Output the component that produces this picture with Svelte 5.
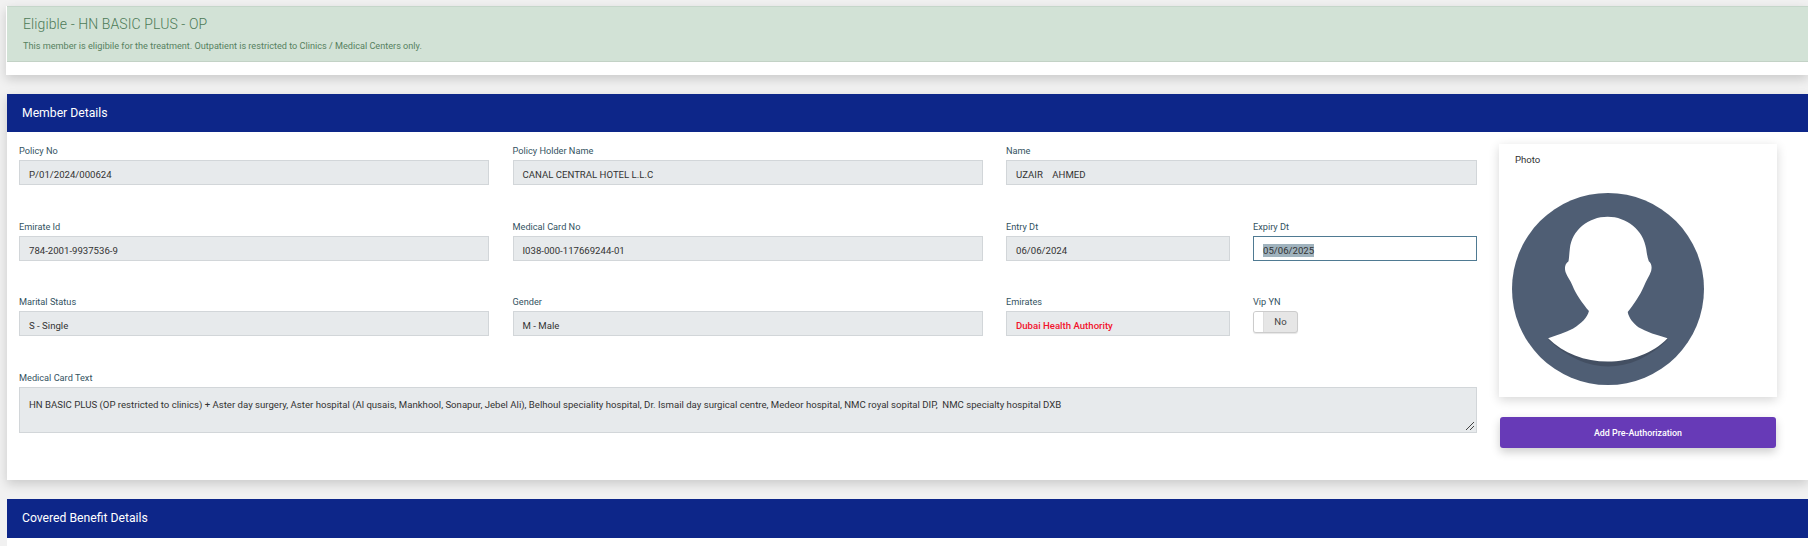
<script>
  const rows = [
    [{ l: 'Policy No', v: 'P/01/2024/000624' }, { l: 'Policy Holder Name', v: 'CANAL CENTRAL HOTEL L.L.C' }, { l: 'Name', v: 'UZAIR    AHMED' }],
    [{ l: 'Emirate Id', v: '784-2001-9937536-9' }, { l: 'Medical Card No', v: 'I038-000-117669244-01' }],
    [{ l: 'Marital Status', v: 'S - Single' }, { l: 'Gender', v: 'M - Male' }]
  ];
  const cardText = 'HN BASIC PLUS (OP restricted to clinics) + Aster day surgery, Aster hospital (Al qusais, Mankhool, Sonapur, Jebel Ali), Belhoul speciality hospital, Dr. Ismail day surgical centre, Medeor hospital, NMC royal sopital DIP,  NMC specialty hospital DXB';
</script>

<div class="page">
  <section class="status-card">
    <div class="alert">
      <h4>Eligible - HN BASIC PLUS - OP</h4>
      <p>This member is eligibile for the treatment. Outpatient is restricted to Clinics / Medical Centers only.</p>
    </div>
  </section>

  <section class="card">
    <header class="bar">Member Details</header>
    <div class="body">
      <div class="form">
        {#each rows[0] as f}
          <div class="field"><span class="label">{f.l}</span><div class="input">{f.v}</div></div>
        {/each}
        {#each rows[1] as f}
          <div class="field"><span class="label">{f.l}</span><div class="input">{f.v}</div></div>
        {/each}
        <div class="split">
          <div class="field"><span class="label">Entry Dt</span><div class="input">06/06/2024</div></div>
          <div class="field"><span class="label">Expiry Dt</span><div class="input focus"><span class="sel">05/06/2025</span></div></div>
        </div>
        {#each rows[2] as f}
          <div class="field"><span class="label">{f.l}</span><div class="input">{f.v}</div></div>
        {/each}
        <div class="split">
          <div class="field"><span class="label">Emirates</span><div class="input red">Dubai Health Authority</div></div>
          <div class="field">
            <span class="label">Vip YN</span>
            <div class="toggle"><span class="knob"></span><span class="off">No</span></div>
          </div>
        </div>
        <div class="field wide">
          <span class="label">Medical Card Text</span>
          <div class="input area">{cardText}
            <svg class="grip" width="10" height="10" viewBox="0 0 10 10"><path d="M1 9 9 1M5 9 9 5" stroke="#444" stroke-width="1" fill="none"/></svg>
          </div>
        </div>
      </div>
      <aside class="side">
        <div class="photo">
          <span class="photo-label">Photo</span>
          <svg class="avatar" viewBox="157 39 574 574" width="192" height="192">
            <circle cx="444" cy="326" r="287" fill="#4f5e74"/>
            <path d="M266 478C320 530 385 558 444 558C505 558 570 530 622 478L622 473L266 473Z" fill="#434f62"/>
            <path fill="#fff" d="M443 110C385 110 336 150 330 205C328 220 328 232 326 243C316 250 313 262 317 275C322 290 332 300 338 316C348 342 368 368 387 392C382 412 366 428 340 444C318 456 290 464 265 473C310 518 375 543 443 543C510 543 580 518 622 473C590 463 560 455 535 440C520 430 506 412 503 395C520 372 540 345 552 316C558 300 568 288 573 272C576 260 574 250 566 243C562 232 560 220 558 205C550 150 500 110 443 110Z"/>
          </svg>
        </div>
        <button class="primary">Add Pre-Authorization</button>
      </aside>
    </div>
  </section>

  <section class="card last">
    <header class="bar tall">Covered Benefit Details</header>
  </section>
</div>

<style>
  :global(body) { margin: 0; background: #f1f1f1; overflow: hidden; }
  .page { width: 1808px; height: 546px; overflow: hidden; padding: 6px 0 0 7px; box-sizing: border-box; font-family: Roboto, sans-serif; }
  .status-card { background: #fff; height: 69px; margin-left: -1px; padding-left: 1px; box-shadow: 0 4px 10px rgba(0,0,0,.16); }
  .alert { background: #d2e2d6; height: 56px; border-top: 1px solid #c5d6ca; border-bottom: 1px solid #c3d2c6; box-sizing: border-box; padding: 8px 0 0 16px; color: #4d7a57; }
  h4 { margin: 0; font-size: 14px; font-weight: 300; line-height: 18px; letter-spacing: .1px; }
  .alert p { margin: 7px 0 0; font-size: 9.15px; font-weight: 400; line-height: 12px; color: #568160; }
  .card { margin-top: 19px; background: #fff; height: 386px; box-shadow: 0 4px 10px rgba(0,0,0,.16); }
  .card.last { margin-top: 19px; height: 60px; box-shadow: none; }
  .bar { background: #0d2689; color: #fff; height: 38px; line-height: 38px; padding-left: 15px; font-size: 12.2px; font-weight: 400; }
  .tall { height: 39px; }
  .body { display: flex; padding: 12px 0 0 12px; }
  .form { width: 1458px; display: grid; grid-template-columns: repeat(3, 1fr); column-gap: 23.5px; align-content: start; }
  .split { display: grid; grid-template-columns: 224px 224px; column-gap: 23px; }
  .field { height: 75.6px; }
  .wide { grid-column: 1 / -1; }
  .label { display: block; height: 16px; font-size: 9.2px; line-height: 13px; color: #34535f; }
  .input { box-sizing: border-box; height: 25px; background: #e7eaec; border: 1px solid #d2d6d9; padding-left: 9px; font-size: 9.6px; line-height: 27px; color: #333; white-space: pre; overflow: hidden; }
  .focus { background: #fff; border-color: #4f7a92; }
  .sel { background: #9fb2bd; padding: 1px 0; }
  .red { color: #f2142c; font-weight: 500; }
  .area { height: 46px; line-height: 16px; padding-top: 9px; position: relative; white-space: pre-wrap; }
  .grip { position: absolute; right: 1px; bottom: 1px; }
  .toggle { box-sizing: border-box; width: 45px; height: 22px; border: 1px solid #ccc; border-radius: 3px; display: flex; background: #e6e6e6; box-shadow: 0 1px 1px rgba(0,0,0,.1); overflow: hidden; }
  .knob { width: 9px; background: #fff; border-right: 1px solid #ddd; }
  .off { flex: 1; text-align: center; font-size: 9.6px; line-height: 19px; color: #444; }
  .side { width: 278px; margin-left: 22px; }
  .photo { box-sizing: border-box; height: 253px; background: #fff; padding: 9px 0 0 16px; box-shadow: 0 3px 10px rgba(0,0,0,.16); position: relative; }
  .photo-label { font-size: 9.6px; line-height: 14px; color: #333; display: block; }
  .avatar { position: absolute; left: 13px; top: 49px; }
  .primary { display: block; width: 276px; height: 31px; margin: 20px 0 0 1px; padding-top: 2px; background: #673ab7; border: 0; border-radius: 3px; color: #fff; font: 500 8.9px Roboto, sans-serif; box-shadow: 0 4px 10px rgba(0,0,0,.2); }
</style>
